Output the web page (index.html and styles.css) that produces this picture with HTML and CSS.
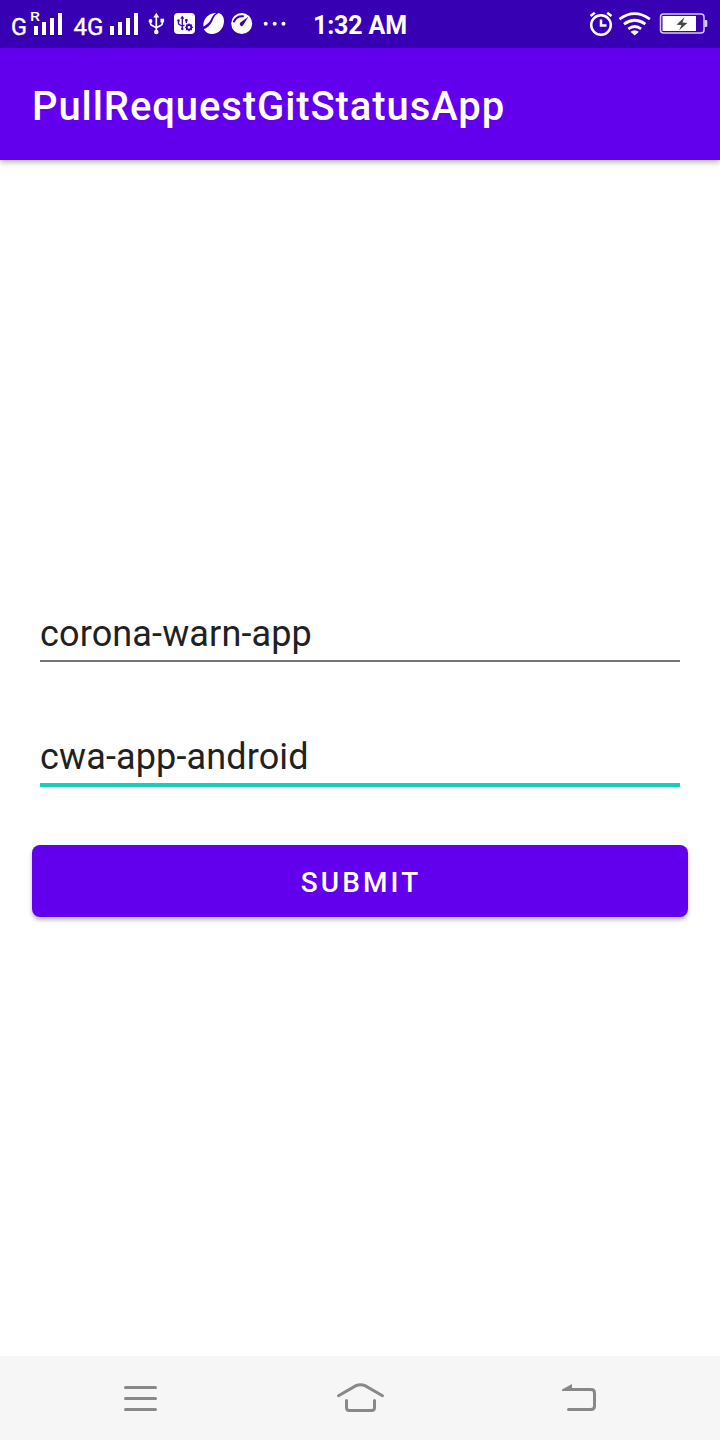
FILE: index.html
```html
<!DOCTYPE html>
<html lang="en">
<head>
<meta charset="utf-8">
<title>PullRequestGitStatusApp</title>
<link rel="stylesheet" href="styles.css">
</head>
<body>
<div class="screen">
  <header class="status-bar">
    <div class="status-left">
      <svg width="70" height="48" viewBox="0 0 70 48">
        <text class="net" x="11" y="35" textLength="16" lengthAdjust="spacingAndGlyphs">G</text>
        <text class="roaming" x="30" y="20.6" textLength="10" lengthAdjust="spacingAndGlyphs">R</text>
        <path d="M34 26h4v9h-4zM42 22h4v13h-4zM50 18h4v17h-4zM58 13h4v22h-4z"/>
      </svg>
      <svg width="75" height="48" viewBox="70 0 75 48">
        <text class="net" x="73.500" y="35" textLength="30" lengthAdjust="spacingAndGlyphs">4G</text>
        <path d="M110 26h4v9h-4zM118 22h4v13h-4zM126 18h4v17h-4zM134 13h4v22h-4z"/>
      </svg>
      <svg width="26" height="48" viewBox="145 0 26 48">
        <g id="usb">
          <path d="M156.300 12.800l3 4.800h-6z"/><circle cx="156.300" cy="32" r="2.300"/>
          <circle cx="150.500" cy="21" r="1.900"/><path d="M160.500 18.700h3.600v3.600h-3.600z"/>
          <path class="line" d="M156.300 16v16M150.500 21v2.500q0 1.200 1.200 1.800l4.600 2.500 4.800-2.500q1.200-.6 1.200-1.800V21"/>
        </g>
      </svg>
      <svg width="28" height="48" viewBox="171 0 28 48">
        <rect x="174" y="13" width="21" height="21" rx="4"/>
        <g class="bar-ink">
          <path d="M182.300 15.500l2 3.200h-4z"/><circle cx="178.500" cy="20.500" r="1.200"/><circle cx="182.300" cy="29" r="1.200"/><path d="M185.200 19h2.400v2.400h-2.400z"/>
          <path class="cut" d="M182.300 18v11M178.500 21v3l3.800 2.200 2.200-1.200M186.400 20v3"/>
          <circle class="gear" cx="189" cy="27.300" r="2.300"/>
          <path class="cut" d="M189 23.500v1.400M189 29.800v1.400M185.200 27.300h1.400M191.500 27.300h1.400M186.300 24.600l1 1M190.700 29l1 1M191.700 24.600l-1 1M187.300 29l-1 1"/>
        </g>
      </svg>
      <svg width="28" height="48" viewBox="199 0 28 48">
        <path d="M203.300 26.500C203 18.500 208.500 13 216.200 13c-3.400 2-4.200 4.300-5.600 7-1.700 3.500-4.300 4.500-7.300 6.500z"/>
        <path d="M218.500 13c3.900 1.200 5.600 4.300 5.500 8.600-.2 7.200-5.700 12.400-12 12.400-3.700 0-6.500-1.500-8.200-4.700 3.500-1.700 6-3.400 7.900-7 1.800-3.600 2.300-7 6.800-9.300z"/>
      </svg>
      <svg width="31" height="48" viewBox="227 0 31 48">
        <circle cx="241.700" cy="23.500" r="10.500"/>
        <path class="dial" d="M234 21.500q2.500-5.800 9-5.300"/>
        <path class="bar-ink" d="M248.300 16.800l-5 8.300a1.900 1.900 0 1 1-2.800-2.500z"/>
      </svg>
      <svg width="42" height="48" viewBox="258 0 42 48">
        <circle cx="265.700" cy="23.700" r="2"/><circle cx="274.700" cy="23.700" r="2"/><circle cx="283.500" cy="23.700" r="2"/>
      </svg>
    </div>
    <span class="clock">1:32 AM</span>
    <div class="status-right">
      <svg width="33" height="48" viewBox="585 0 33 48">
        <circle class="ring" cx="601" cy="25" r="9.800"/>
        <path class="ring" d="M601 19.500v6h5.500M590.500 16l4.300-3.300M611.500 16l-4.300-3.300"/>
      </svg>
      <svg width="37" height="48" viewBox="618 0 37 48">
        <path class="wave" d="M619.500 19.200q15-11.200 30.400 0M624 24.200q10.700-7.800 21.400 0M628.300 28.800q6.400-4.500 12.800 0"/>
        <path d="M630.500 31.800q4.200-3.300 8.400 0l-4.200 3.700z"/>
      </svg>
      <svg width="65" height="48" viewBox="655 0 65 48">
        <rect class="case" x="660.500" y="14" width="43.500" height="19" rx="3"/>
        <path d="M662.500 16h33.500v15h-33.500z"/><path class="cap" d="M704.500 20h1.500q1.300 0 1.300 1.300v4.400q0 1.300-1.300 1.300h-1.500z"/>
        <path class="bolt" d="M684.500 17.200l-8 7.500 5 .3-2.400 5.300 8.300-7.400-5-.4z"/>
      </svg>
    </div>
  </header>
  <div class="app-bar"><h1 class="title">PullRequestGitStatusApp</h1></div>
  <main class="content">
    <div class="field">corona-warn-app</div>
    <div class="field focused">cwa-app-android</div>
    <button class="submit">SUBMIT</button>
  </main>
  <nav class="nav-bar">
    <svg width="50" height="44" viewBox="115 1376 50 44"><path d="M125.500 1387.500h30M125.500 1398.500h30M125.500 1409.500h30"/></svg>
    <svg width="60" height="44" viewBox="330 1376 60 44"><path d="M338.500 1395.700l17.500-10q4.500-2 9 0l17.500 10M346.500 1400.500v7q0 3 3 3h22q3 0 3-3v-7"/></svg>
    <svg width="50" height="44" viewBox="555 1376 50 44"><path d="M566 1389.500h25q3.500 0 3.500 3.500v13q0 3.500-3.500 3.500h-22.500"/><path class="arrow" d="M562 1389.500l10-5.500v7h-10z"/></svg>
  </nav>
</div>
</body>
</html>
```
FILE: styles.css
```css
body {
  margin: 0;
  font-family: Roboto, "Liberation Sans", sans-serif;
}

.screen {
  display: flex;
  flex-direction: column;
  width: 720px;
  height: 1440px;
  background: #fff;
}

.status-bar {
  position: relative;
  z-index: 1;
  display: flex;
  height: 48px;
  background: #3700b3;
  color: #fff;
}

.status-bar svg {
  display: block;
  fill: #fff;
}

.status-left,
.status-right {
  display: flex;
}

.status-right {
  margin-left: auto;
}

.net {
  font-size: 23px;
  stroke: #fff;
  stroke-width: 0.4px;
}

.roaming {
  font-size: 13px;
  font-weight: 500;
}

.clock {
  padding-left: 13px;
  font-size: 25px;
  font-weight: 700;
  line-height: 51px;
  letter-spacing: -0.15px;
  white-space: nowrap;
}

.line,
.cut,
.gear,
.dial,
.ring,
.wave,
.case {
  fill: none;
}

.line { stroke: #fff; stroke-width: 1.7; }
.status-bar .bar-ink { fill: #3700b3; }
.cut { stroke: #3700b3; stroke-width: 1.3; }
.status-bar .gear { fill: none; stroke: #3700b3; stroke-width: 1.8; }
.status-bar .cut { fill: none; }
.dial { stroke: #3700b3; stroke-width: 2; stroke-linecap: round; }
.ring { stroke: #fff; stroke-width: 2.5; }
.wave { stroke: #fff; stroke-width: 2.8; }
.case { stroke: #d8ccf1; stroke-width: 1.5; }
.cap { fill: #d8ccf1; }
.bolt { fill: #444; }

.app-bar {
  display: flex;
  align-items: center;
  height: 112px;
  padding-left: 32px;
  background: #6200ee;
  box-shadow: 0 2px 6px rgba(0, 0, 0, 0.32);
}

.title {
  margin: 6px 0 0;
  color: #fff;
  font-size: 40px;
  font-weight: 500;
  line-height: 48px;
  letter-spacing: 0.91px;
}

.content {
  display: flex;
  flex: 1;
  flex-direction: column;
  padding: 448px 32px 0;
}

.field {
  box-sizing: border-box;
  height: 54px;
  margin: 0 8px;
  padding-top: 5px;
  border-bottom: 2px solid #757575;
  color: #212121;
  font-size: 36px;
  line-height: 42px;
  letter-spacing: 0.14px;
}

.focused {
  height: 56px;
  margin-top: 69px;
  border-bottom: 4px solid #16d0bf;
}

.submit {
  height: 72px;
  margin-top: 58px;
  padding: 2px 0 0 2px;
  border: 0;
  border-radius: 8px;
  background: #6200ee;
  box-shadow: 0 3px 4px rgba(0, 0, 0, 0.27);
  color: #fff;
  font: 500 28px Roboto, "Liberation Sans", sans-serif;
  letter-spacing: 3.1px;
}

.nav-bar {
  display: flex;
  align-items: center;
  justify-content: space-between;
  height: 84px;
  box-sizing: border-box;
  padding: 0 115px;
  background: #f6f6f6;
}

.nav-bar svg {
  display: block;
  fill: none;
  stroke: #888;
  stroke-width: 3;
  stroke-linecap: round;
}

.nav-bar .arrow {
  fill: #888;
  stroke: none;
}
```
